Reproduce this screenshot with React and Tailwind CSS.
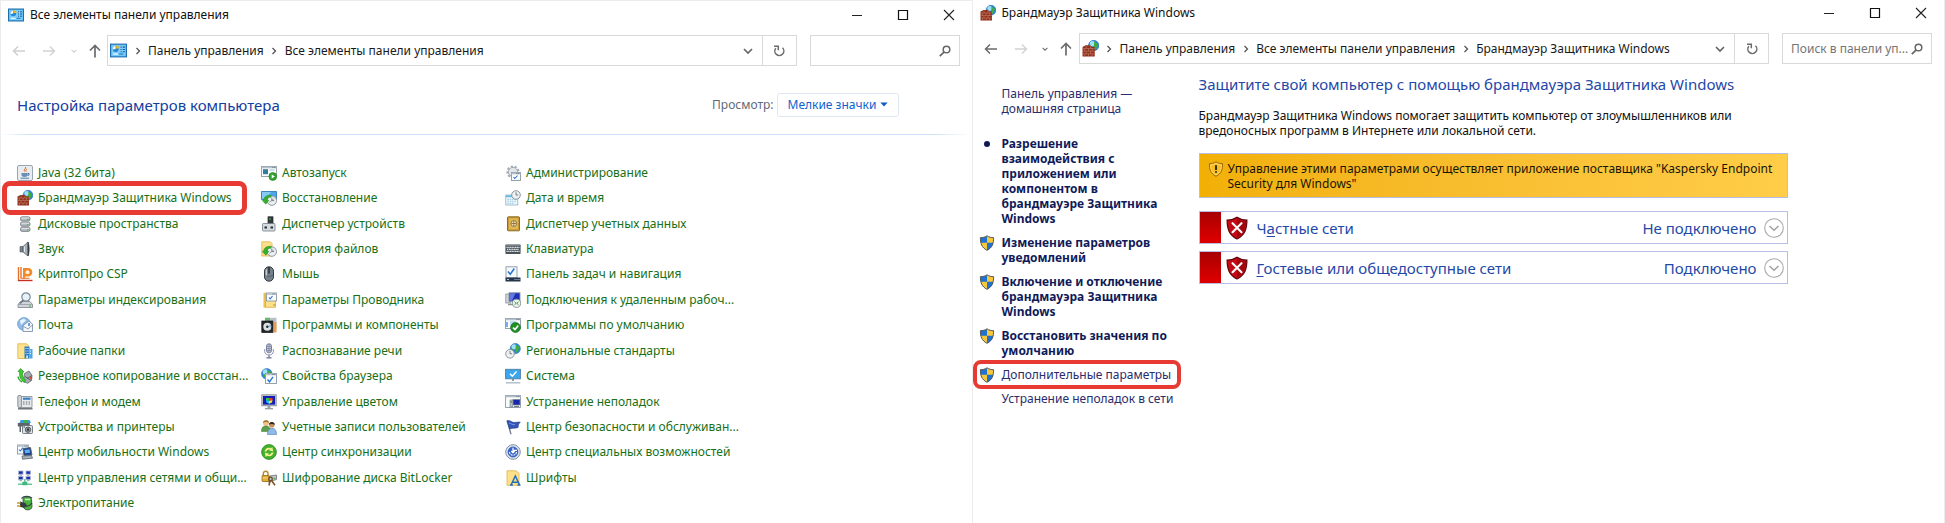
import React from "react";

const Svg = ({ children, className = "h-4 w-4", box = "0 0 16 16" }) => (
  <svg viewBox={box} className={`${className} shrink-0`} fill="none" aria-hidden="true">
    {children}
  </svg>
);

/* ---------- shared drawing pieces ---------- */

const Globe = ({ cx, cy, r }) => (
  <g>
    <circle cx={cx} cy={cy} r={r} fill="#2f86dd" stroke="#1b5fae" strokeWidth=".5" />
    <circle cx={cx - r * 0.25} cy={cy - r * 0.35} r={r * 0.5} fill="#9fe0f5" />
    <path d={`M${cx + r * 0.1} ${cy - r * 0.8}l${r * 0.7} ${r * 0.5}l-${r * 0.3} ${r * 0.9}l-${r * 0.5} ${r * 0.2}z`} fill="#3fae3a" />
    <path d={`M${cx - r * 0.8} ${cy}l${r * 0.6} ${r * 0.2}l-${r * 0.1} ${r * 0.6}z`} fill="#3fae3a" />
  </g>
);

const Clock = ({ cx, cy, r }) => (
  <g>
    <circle cx={cx} cy={cy} r={r} fill="#eef1f3" stroke="#8a949c" strokeWidth="1" />
    <path d={`M${cx} ${cy - r * 0.65}V${cy}H${cx + r * 0.5}`} stroke="#5a646c" strokeWidth=".8" />
  </g>
);

const HistoryClock = () => (
  <g>
    <Clock cx={10.8} cy={10.6} r={4.7} />
    <path d="M8.3 12.3 12.8 9" stroke="#7b858c" strokeWidth=".8" />
    <path d="M2.3 10.5C3 6.5 6.3 4.6 10.3 5.4L9.8 7.4C7.5 7 6 8.3 5.9 10.3H7.9L4.8 14.2 1.2 10.5z" fill="#35b02f" stroke="#1d7f1c" strokeWidth=".4" />
  </g>
);

const WindowFrame = ({ x = 0.5, y = 1.5, w = 15, h = 10 }) => (
  <g>
    <rect x={x} y={y} width={w} height={h} fill="#fbfcfd" stroke="#8b98a5" strokeWidth=".9" />
    <path d={`M${x} ${y + 1}h${w}`} stroke="#b5c0ca" strokeWidth="1.6" />
    <path d={`M${x + w - 4} ${y + 1}h.9m1 0h.9`} stroke="#4d5c69" strokeWidth=".9" />
  </g>
);

/* ---------- application icons ---------- */

const ControlPanelIcon = ({ className }) => (
  <Svg className={className}>
    <rect x=".5" y="2" width="15" height="12" fill="#4fb3ee" stroke="#1f6fae" />
    <rect x="1.5" y="3" width="13" height="10" fill="#7fcdf8" />
    <circle cx="5.3" cy="6.5" r="2.8" fill="#2187d6" />
    <path d="M5.3 6.5V3.7A2.8 2.8 0 0 0 2.6 7z" fill="#fff" />
    <path d="M5.8 6V3.2a2.8 2.8 0 0 1 2.7 2.8z" fill="#f4b41b" />
    <path d="M10 4.8h1m1 0h2M10 7h1m1 0h2M10 9.2h1m1 0h2" stroke="#0c5aa5" />
    <path d="M3 11.3h4.5" stroke="#fff" />
    <path d="M8.5 11.3h4" stroke="#1c74c1" />
  </Svg>
);

const FirewallIcon = ({ className }) => (
  <Svg className={className}>
    <Globe cx={11} cy={5.2} r={4.9} />
    <path d="M.5 6.500l3-1.500h4l2 1.500h2.500V15.500H.5z" fill="#8f3220" />
    <path d="M.5 8h11.500M.5 10.500h11.500M.5 13h11.500M4 5.500V8m4-2.5V8M2.500 8v2.500m3.600-2.500v2.500M9.500 8v2.500M4 10.500V13m4-2.500V13m-5.500 0v2.500m3.600-2.500v2.500m3.400-2.500v2.500" stroke="#cf866b" strokeWidth=".5" />
  </Svg>
);

const ShieldShape = "M8 .8c2 1.400 4.300 1.900 6.600 1.900 0 5.800-1.200 9.900-6.600 12.600C2.600 12.600 1.400 8.500 1.400 2.700 3.700 2.700 6 2.200 8 .8z";

const UacShield = ({ className }) => (
  <Svg className={className}>
    <path d={ShieldShape} fill="#f9c73a" />
    <path d="M8 1.200v6.500H1.700C1.500 6 1.400 4.500 1.400 2.700 3.700 2.700 6 2.300 8 1.200zM8 7.700h6.200c-.7 3.600-2.400 6-6.200 7.500z" fill="#1e73d2" />
    <path d={ShieldShape} stroke="#4c5560" strokeWidth="1" />
  </Svg>
);

const WarnShield = ({ className }) => (
  <Svg className={className}>
    <path d={ShieldShape} fill="#fbbd1d" stroke="#9a6a05" strokeWidth="1" />
    <path d="M8 2.300c1.700 1 3.500 1.500 5.300 1.600 0 4.500-1.100 7.700-5.300 9.900-4.200-2.200-5.300-5.400-5.300-9.900C4.500 3.800 6.300 3.300 8 2.300z" stroke="#ffe08a" strokeWidth=".8" />
    <path d="M8 4.300v4.700M8 10.200v1.600" stroke="#1d1600" strokeWidth="1.700" />
  </Svg>
);

const ErrorShield = ({ className }) => (
  <Svg className={className}>
    <path d={ShieldShape} fill="#c70b14" stroke="#5e0509" strokeWidth=".8" />
    <path d="M8 1.600c1.900 1.200 3.800 1.700 5.900 1.800-.1 5-1.200 8.500-5.900 11z" fill="#a5060d" />
    <path d="m5 4.800 6 6m0-6-6 6" stroke="#fff" strokeWidth="1.400" strokeLinecap="round" />
  </Svg>
);

/* ---------- icons of the control panel items ---------- */

const itemIcons = {
  java: (
    <>
      <rect x=".5" y=".5" width="15" height="15" rx="1.500" fill="#e9edf1" stroke="#9aa6b2" />
      <path d="M8.500 2c1 1.500-2.500 2.600-1 4.500M10 4c-1.500.8-1.500 1.500-.8 2.800" stroke="#e0702a" strokeWidth="1" />
      <path d="M4.500 8h6v1.800c0 1.700-1 2.200-3 2.200s-3-.5-3-2.200z" fill="#6c8fb3" />
      <path d="M10.500 8.500h1.500v1.700h-1.700" stroke="#3f6c99" strokeWidth=".9" />
      <path d="M3.500 13.200h8.500" stroke="#4d7aa6" strokeWidth="1" />
    </>
  ),
  storage: (
    <>
      {[0.8, 6, 11.200].map((y) => (
        <g key={y}>
          <rect x="3.500" y={y} width="9.500" height="4.200" rx="1.600" fill="#b5bbc0" stroke="#6f777e" strokeWidth=".8" />
          <path d={`M4.500 ${y + 1.200}h7.500`} stroke="#e9ecee" strokeWidth=".9" />
          <rect x="10" y={y + 2} width="1.600" height="1.200" fill="#4ec23c" />
        </g>
      ))}
    </>
  ),
  sound: (
    <>
      <path d="M3 5.500h3v5.500H3z" fill="#7c858d" stroke="#4d555c" strokeWidth=".6" />
      <path d="M6 5.500 11 1v14l-5-4z" fill="#a6afb7" stroke="#50595f" strokeWidth=".7" />
      <path d="M11 1c1.600 3 1.600 11 0 14z" fill="#38414a" stroke="#2b3238" strokeWidth=".6" />
      <path d="M7.500 5.500v5.500" stroke="#e3e8ec" />
    </>
  ),
  crypto: (
    <>
      <path d="M1.500 1v14M4 1v11" stroke="#e8722b" strokeWidth="1.400" />
      <path d="M1 14.500h14.500" stroke="#c62f22" strokeWidth="1.400" />
      <path d="M3.500 12.300h9" stroke="#e8722b" />
      <path d="M6 2h5c3 0 4.300 2 4.300 4.200S13.700 10.500 11 10.500H8V13H6z" fill="#f28a2c" />
      <circle cx="10.500" cy="6.300" r="2" fill="#fff3d8" />
    </>
  ),
  indexing: (
    <>
      <path d="M1 12.500 3.500 9.500h9.500l2.500 3v3H1z" fill="#cfd5da" stroke="#7b848c" strokeWidth=".8" />
      <path d="M1 12.500h14.500" stroke="#8d969d" strokeWidth=".7" />
      <path d="M12 14h2" stroke="#3fae3a" />
      <circle cx="9" cy="5" r="4.200" fill="#e6f2fa" stroke="#7d8994" strokeWidth="1.200" />
      <path d="M6.200 8.200 3 11.500" stroke="#6d7882" strokeWidth="1.700" />
    </>
  ),
  mail: (
    <>
      <circle cx="7" cy="7" r="6.400" fill="#8fbbe8" stroke="#5f8fc4" strokeWidth=".7" />
      <path d="M3 3.500 7 1.500l2 2-3 2.500-2 2z" fill="#e9f4fd" />
      <path d="M6 8.500 12 4l3.500 3v7.500H6z" fill="#f4f8fc" stroke="#7288a4" strokeWidth=".8" />
      <path d="m6 9 5 3 4.500-4" stroke="#7288a4" strokeWidth=".8" />
      <path d="M12 6v3" stroke="#3364b4" strokeWidth="1.300" />
    </>
  ),
  workfolders: (
    <>
      <path d="M.8.8h9l1.500 1.700v13H.8z" fill="#ffe28c" stroke="#dcb24a" strokeWidth=".8" />
      <rect x="7.500" y="3.500" width="5" height="12" fill="#2c7fc4" />
      <rect x="12.500" y="6" width="3" height="9.500" fill="#4da5e2" />
      <path d="M8.500 5.500h1m1 0h1m-3 2.500h1m1 0h1m-3 2.500h1m1 0h1m1.500-2.500h1m-1 2.500h1" stroke="#e3f3ff" strokeWidth="1.200" />
      <rect x="9.300" y="12.500" width="1.600" height="3" fill="#e3f3ff" />
    </>
  ),
  backup: (
    <>
      <path d="M7.500 5.500 12 3l3 4.500-.5 5-4 2.800-4-2z" fill="#a5acb2" stroke="#5c646b" strokeWidth=".8" />
      <path d="m8 8.500 6 4m1-5-5 3" stroke="#454d53" strokeWidth=".8" />
      <path d="M1 3.500 3.500.5 7 4H5.500c-.5 3.500.5 6 3 8l-1 2.500C4 12.500 2 9 2.700 3.800z" fill="#3ccf2e" stroke="#1a8216" strokeWidth=".6" />
      <path d="M1 8.500c.5 3 2 4.500 4 5.300" stroke="#27a51f" strokeWidth="1.300" />
      <circle cx="14" cy="10" r="1.200" fill="#e0452f" />
    </>
  ),
  phone: (
    <>
      <path d="M3.500 2.500H15v11H3.500z" fill="#e7eaec" stroke="#7e878e" strokeWidth=".8" />
      <rect x=".8" y="1.500" width="3.600" height="12" rx="1.200" fill="#d2d7db" stroke="#747d84" strokeWidth=".8" />
      <rect x="6" y="3.600" width="7.500" height="2.200" fill="#3a7fc5" />
      <path d="M6 8h1.500m1.300 0h1.500m1.300 0H13M6 10h1.500m1.300 0h1.500m1.300 0H13" stroke="#68727a" strokeWidth="1.100" />
      <path d="M1 14.800h14.500" stroke="#565e65" strokeWidth="1.300" />
    </>
  ),
  printers: (
    <>
      <path d="M3.500 1h9l1.500 3H2.500z" fill="#3a9be4" />
      <path d="M6 1h4v3H6z" fill="#39b54a" />
      <path d="M.8 4h12v3.500H4V13H2.500V7.500H.8z" fill="#5c646c" />
      <rect x="5.500" y="6.500" width="10" height="8" rx="1" fill="#dfe3e6" stroke="#5c656c" strokeWidth=".8" />
      <circle cx="11" cy="10.700" r="2.700" fill="#8e979e" stroke="#40484e" strokeWidth=".8" />
      <circle cx="11" cy="10.700" r="1.100" fill="#23292e" />
      <path d="M6.500 8h1.500" stroke="#30383e" />
    </>
  ),
  mobility: (
    <>
      <WindowFrame x={0.5} y={1} w={11} h={9} />
      <path d="m2 5.500 1.300 1.500L6 3.500" stroke="#2476d2" strokeWidth="1.100" />
      <path d="M6 4.500 13.500 3.500 15 11l-8 .5z" fill="#1b3f8f" stroke="#57626d" strokeWidth=".9" />
      <path d="M7.500 6 12.500 5.200l.6 3.500-4.900.5z" fill="#5fb1ee" />
      <path d="m5 12 9.500-.5 1 2.700-10 1z" fill="#a9b2ba" stroke="#59636c" strokeWidth=".8" />
    </>
  ),
  network: (
    <>
      {[[1.500, 1], [9, 1], [1.500, 6.500], [9, 6.500]].map(([x, y]) => (
        <g key={`${x}-${y}`}>
          <rect x={x} y={y} width="4.500" height="3.200" fill="#1c2fb4" stroke="#a8b5ce" strokeWidth=".8" />
          <path d={`M${x + 1} ${y + 4.200}h2.500`} stroke="#8695a8" strokeWidth=".9" />
        </g>
      ))}
      <path d="M7.800 9v4M1 14.200h14" stroke="#66c79a" strokeWidth="1.600" />
      <rect x="5.300" y="11.800" width="5" height="3.400" rx=".6" fill="#3fb77e" />
    </>
  ),
  power: (
    <>
      <path d="M6 4.500C6 1 14.500 1 14.500 4.500l.5 7c0 4.500-8.500 4.500-8.500 0z" fill="#49b43f" stroke="#2a4a2a" strokeWidth=".8" />
      <path d="M4.500 3.500C7 .8 12 .8 15 3" stroke="#39444d" strokeWidth="1.200" />
      <path d="M8 4.500h5" stroke="#c6f0bb" strokeWidth="1.500" />
      <path d="M3 6.500 8 8c2.500 1 2 4-1 4.700L3 12z" fill="#353c42" />
      <path d="M0 8h3.500M0 11h3.500" stroke="#c9982c" strokeWidth="1.300" />
      <path d="M8.500 11c3 1 4.500-.5 6.500-3" stroke="#2f363b" strokeWidth="1.100" />
    </>
  ),
  autoplay: (
    <>
      <WindowFrame />
      <rect x="2" y="4.200" width="5" height="5" fill="#2f7f9c" />
      <path d="M8.500 5h5" stroke="#9fc4dd" />
      <circle cx="11.800" cy="11.500" r="3.900" fill="#2fa52b" stroke="#1a7a18" strokeWidth=".6" />
      <path d="m10.700 9.500 3.200 2-3.200 2z" fill="#fff" />
    </>
  ),
  recovery: (
    <>
      <path d="M.5 1.500h15v8H.5z" fill="#4aa7e8" stroke="#2471ae" strokeWidth=".8" />
      <path d="M1 2h9L5 9H1z" fill="#85cbf6" />
      <HistoryClock />
    </>
  ),
  devices: (
    <>
      <rect x="7" y=".8" width="5" height="9" fill="#33393e" stroke="#1f2428" strokeWidth=".7" />
      <path d="M8 3h2" stroke="#43c13a" strokeWidth="1.200" />
      <rect x="1.500" y="7.500" width="12.500" height="7.500" rx=".8" fill="#d6dbdf" stroke="#737c83" strokeWidth=".8" />
      <path d="M3.500 11.500h2.500m3.500 0H12" stroke="#272d32" strokeWidth="2.200" />
    </>
  ),
  filehistory: (
    <>
      <path d="M.8.8h8.500L11 2.500V15H.8z" fill="#ffe08a" stroke="#ddb54e" strokeWidth=".8" />
      <HistoryClock />
    </>
  ),
  mouse: (
    <>
      <rect x="3.500" y=".8" width="9" height="14.400" rx="4.300" fill="#77818b" stroke="#333b43" strokeWidth="1" />
      <path d="M5.300 3.500v7" stroke="#c4ccd3" strokeWidth="1.400" />
      <path d="M8 1v6.500" stroke="#252c33" strokeWidth="1.500" />
      <path d="M4 9.500c2.500 1.200 5.500 1.200 8 0" stroke="#4b555f" strokeWidth=".7" />
    </>
  ),
  explorer: (
    <>
      <path d="M2.500.8h3v14.700H2.500z" fill="#edbf4c" />
      <path d="M4.500 1.800h10v13.500h-10z" fill="#ffe08a" stroke="#d9ae42" strokeWidth=".8" />
      <WindowFrame x={5.500} y={1} w={10} h={8} />
      <path d="m8 5.500 1.200 1.300L11.500 4" stroke="#2476d2" strokeWidth="1.100" />
      <path d="M12 13h2.500" stroke="#b8882a" />
    </>
  ),
  programs: (
    <>
      <path d="M4 .8h11.500v12H11z" fill="#bac1c6" />
      <path d="M12 5h3.500v10.500H12z" fill="#e7a05a" />
      <path d="M4 .8h5v3H4z" fill="#6eb573" />
      <rect x=".8" y="4" width="11" height="11.500" fill="#23282d" stroke="#0f1316" strokeWidth=".7" />
      <circle cx="6.300" cy="9.700" r="4" fill="#dde1e4" />
      <path d="M6.300 9.700 9.500 7.500a4 4 0 0 1 .5 3z" fill="#8fb8d8" />
      <circle cx="6.300" cy="9.700" r="1.200" fill="#23282d" />
    </>
  ),
  speech: (
    <>
      <rect x="5.500" y=".8" width="5" height="9" rx="2.400" fill="#c3c8da" stroke="#6c7390" strokeWidth=".9" />
      <path d="M5.500 3.500h5M5.500 5.500h5M5.500 7.500h5M8 1v8" stroke="#7b829d" strokeWidth=".7" />
      <path d="M3.700 6v2.500c0 4.600 8.600 4.600 8.600 0V6" stroke="#8d94ac" strokeWidth="1" />
      <path d="M8 12v2M5.500 14.800h5" stroke="#7b829d" strokeWidth="1.400" />
    </>
  ),
  internet: (
    <>
      <Globe cx={5.800} cy={5.800} r={5.300} />
      <WindowFrame x={4.500} y={5.500} w={11} h={10} />
      <path d="m6.500 11.500 2 2.300L12 8.800" stroke="#2476d2" strokeWidth="1.400" />
    </>
  ),
  color: (
    <>
      <rect x=".8" y=".8" width="14.400" height="11" fill="#c3c9ce" stroke="#7d868d" strokeWidth=".8" />
      <rect x="2" y="2" width="12" height="8.600" fill="#131fb4" />
      <path d="M5 4h3v3l-3-1z" fill="#2fc93a" />
      <path d="M8 4h3.500v2L8 7z" fill="#ef3a2b" />
      <path d="m5 6 3 1v2.800L5.500 8.500z" fill="#29c4ee" />
      <path d="m8 7 3.500-1-.5 2.500L8 9.800z" fill="#f7e239" />
      <path d="M6.500 12h3v2h-3z" fill="#9aa3aa" />
      <path d="M4 14.700h8" stroke="#8b949b" strokeWidth="1.200" />
    </>
  ),
  users: (
    <>
      <circle cx="5" cy="4" r="3" fill="#f0c48c" />
      <path d="M2 4C2 .5 8 0 8 4 6.500 3.200 4 2.500 2 4z" fill="#a5752f" />
      <path d="M.5 12.500C.5 8 2.500 7 5 7s4.500 1.500 4.500 5.500z" fill="#5f9e4c" stroke="#3f7431" strokeWidth=".5" />
      <circle cx="10.800" cy="5.800" r="2.800" fill="#c98e5d" />
      <path d="M8 5.500c0-3.500 5.800-3.500 5.800.3C12 4.800 10 4.500 8 5.500z" fill="#2e2a29" />
      <path d="M6.500 15.500c0-4.500 2-6.200 4.500-6.200s4.500 1.700 4.500 6.200z" fill="#8ebbe6" stroke="#4d7fb5" strokeWidth=".6" />
    </>
  ),
  sync: (
    <>
      <circle cx="8" cy="8" r="7.400" fill="#43b02f" stroke="#278a1d" strokeWidth=".8" />
      <path d="M3.500 7.500C4 4.500 7 3 10 4.300L11.300 3l.9 4.200-4.200-.6 1.200-1C7.500 5 5.700 6 5.500 7.500z" fill="#f5f08e" />
      <path d="M12.500 8.500c-.5 3-3.500 4.500-6.500 3.200L4.700 13l-.9-4.200 4.200.6-1.200 1c1.700.6 3.500-.4 3.700-1.900z" fill="#f5f08e" />
    </>
  ),
  bitlocker: (
    <>
      <path d="M5 6.500 15.500 5v4.500L7 12z" fill="#bfc5ca" stroke="#6b747b" strokeWidth=".8" />
      <path d="M12.500 8.500h2" stroke="#3db733" strokeWidth="1.200" />
      <path d="M2.300 6V3.500c0-3 4.700-3 4.700 0V6" stroke="#b58a2d" strokeWidth="1.400" />
      <rect x="1" y="5.500" width="7" height="6" rx=".7" fill="#e3ad35" stroke="#94691a" strokeWidth=".8" />
      <path d="M1.500 8h6" stroke="#f8dd8e" strokeWidth=".9" />
      <circle cx="9.500" cy="9" r="1.800" stroke="#6b4a20" strokeWidth="1.300" />
      <path d="m10.500 10.500 3.500 4.700M9 11l-1 4.500" stroke="#7a5626" strokeWidth="1.600" />
    </>
  ),
  admin: (
    <>
      <circle cx="8" cy="7" r="5.600" stroke="#a3acb4" strokeWidth="2" strokeDasharray="2.200 1.700" />
      <circle cx="8" cy="7" r="4.600" fill="#e3e7ea" stroke="#929ba3" strokeWidth=".8" />
      <WindowFrame x={6.500} y={7.500} w={9} h={8} />
      <path d="m8.500 12 1.300 1.500L12.500 10.500" stroke="#2476d2" strokeWidth="1.100" />
    </>
  ),
  datetime: (
    <>
      <rect x=".8" y="5" width="12" height="10" fill="#eaf6fc" stroke="#8fb3c6" strokeWidth=".8" />
      <path d="M.8 6.300h12" stroke="#67b7df" strokeWidth="1.800" />
      <path d="M2.500 9.300h8.500M2.500 11.300h8.500M2.500 13.300h6" stroke="#9fc9de" strokeWidth="1" strokeDasharray="1.500 .8" />
      <Clock cx={11} cy={5} r={4.300} />
    </>
  ),
  credentials: (
    <>
      <rect x="2.500" y=".8" width="12" height="14" rx=".8" fill="#c79a35" stroke="#80601c" strokeWidth=".9" />
      <rect x="4" y="2.300" width="9" height="11" fill="#deb654" />
      <circle cx="8.800" cy="7.500" r="2.900" fill="#f3e6bf" stroke="#7d6126" strokeWidth=".8" />
      <path d="M8.800 5v5M6.300 7.500h5" stroke="#7d6126" strokeWidth=".8" />
    </>
  ),
  keyboard: (
    <>
      <rect x=".4" y="3.500" width="15.200" height="9.500" rx=".7" fill="#4b535b" />
      <path d="M1 4.300h14" stroke="#8a949d" strokeWidth=".9" />
      <path d="M1.500 6.300h13M2 8.300h12M1.500 10.300h13" stroke="#dbe0e4" strokeWidth="1.200" strokeDasharray="1.300 .4" />
    </>
  ),
  taskbar: (
    <>
      <rect x="1" y=".8" width="11" height="11" fill="#f5f9fc" stroke="#8a98a5" strokeWidth=".9" />
      <path d="m3 5.500 2.300 2.800L9.300 2.500" stroke="#2476d2" strokeWidth="1.500" />
      <path d="M.5 11.500h15v4H.5z" fill="#26354a" />
      <path d="M2 13.500h2m5.500 0h1m1 0h1m1 0h1" stroke="#b8c7d8" strokeWidth="1.200" />
    </>
  ),
  remote: (
    <>
      <rect x=".8" y="2" width="5" height="9" fill="#cdd3d8" stroke="#7d878f" strokeWidth=".7" />
      <rect x="4" y=".8" width="11" height="8.500" fill="#1a2fb5" stroke="#8d98a3" strokeWidth=".9" />
      <path d="M4.500 1.300h6L7 8.800H4.500z" fill="#6379de" />
      <path d="M3 12.500h6" stroke="#8b959d" strokeWidth="1.500" />
      <circle cx="11.500" cy="11.300" r="4.100" fill="#eef2f0" stroke="#858f96" strokeWidth=".9" />
      <path d="m9.500 9.800 1.700 1.500-1.700 1.500m4-3-1.700 1.500 1.700 1.500" stroke="#2fa52b" strokeWidth="1" />
    </>
  ),
  defaults: (
    <>
      <WindowFrame />
      <path d="M2 5v5" stroke="#2f86dd" strokeWidth="1.300" />
      <rect x="5" y="4" width="6" height="4" fill="#b9dcf5" />
      <circle cx="10.500" cy="10.500" r="4.900" fill="#218f25" stroke="#13661a" strokeWidth=".7" />
      <path d="m8 10.600 2 2 3.300-4" stroke="#fff" strokeWidth="1.500" />
    </>
  ),
  region: (
    <>
      <Globe cx={10.300} cy={5.600} r={5.100} />
      <Clock cx={5} cy={10.800} r={4.300} />
    </>
  ),
  system: (
    <>
      <rect x=".6" y="1.300" width="14.800" height="9.500" fill="#3ba6ee" stroke="#4f7da0" strokeWidth=".9" />
      <path d="m5 5.800 2.300 2.400L11.500 3.500" stroke="#fff" strokeWidth="1.500" />
      <path d="M8 11v2" stroke="#8b959d" strokeWidth="2" />
      <path d="M.8 14.800h14.500" stroke="#a9b5c0" strokeWidth="1.300" />
    </>
  ),
  troubleshoot: (
    <>
      <WindowFrame x={0.600} y={1.500} w={14.800} h={12} />
      <rect x="8" y="5.500" width="7" height="5.500" fill="#1a25ad" stroke="#7e8993" strokeWidth=".7" />
      <rect x="5" y="6" width="2.800" height="7" fill="#b9c1c7" stroke="#6e7880" strokeWidth=".6" />
      <path d="M5.500 8h1.500" stroke="#35a52c" strokeWidth="1.300" />
      <path d="M9 12.500h5" stroke="#737d85" strokeWidth="1.300" />
    </>
  ),
  flag: (
    <>
      <path d="M2 1.500 6 15.200" stroke="#6f7a94" strokeWidth="1.300" />
      <path d="M2.200 1.800C5 .8 6.500 3.500 9 3.500c2 0 4-.7 6.300-.2-2 1.200-2 3.200-2.200 5.200-2.500 1-5 .2-8.500 1.500z" fill="#3355b8" stroke="#1e3a8d" strokeWidth=".6" />
      <path d="M4 4c2 .5 3 1.800 6 1.800" stroke="#7c97e4" strokeWidth="1" />
    </>
  ),
  ease: (
    <>
      <circle cx="8" cy="8" r="7.300" fill="#dfe4ec" stroke="#8791a3" strokeWidth="1" />
      <circle cx="8" cy="8" r="5.400" fill="#3b64c8" />
      <path d="M8 3.800v4.700M6.300 7l1.700 1.800L9.700 7M8.500 6.300H12" stroke="#fff" strokeWidth="1.200" />
      <path d="M4.500 8c.3 4.300 6.700 4.300 7 0" stroke="#fff" strokeWidth="1.100" strokeDasharray="2 .8" />
    </>
  ),
  fonts: (
    <>
      <path d="M2 .8h9l3 2.500v12H2z" fill="#ffe08a" stroke="#dcb24a" strokeWidth=".8" />
      <path d="m6 15 4.300-9 4.300 9M7.500 12.300h5.500M5 15h2.800M12.500 15h3" stroke="#1d6fc0" strokeWidth="1.500" />
    </>
  ),
};

const columns = [
  [
    ["java", "Java (32 бита)"],
    ["firewall", "Брандмауэр Защитника Windows"],
    ["storage", "Дисковые пространства"],
    ["sound", "Звук"],
    ["crypto", "КриптоПро CSP"],
    ["indexing", "Параметры индексирования"],
    ["mail", "Почта"],
    ["workfolders", "Рабочие папки"],
    ["backup", "Резервное копирование и восстан..."],
    ["phone", "Телефон и модем"],
    ["printers", "Устройства и принтеры"],
    ["mobility", "Центр мобильности Windows"],
    ["network", "Центр управления сетями и общи..."],
    ["power", "Электропитание"],
  ],
  [
    ["autoplay", "Автозапуск"],
    ["recovery", "Восстановление"],
    ["devices", "Диспетчер устройств"],
    ["filehistory", "История файлов"],
    ["mouse", "Мышь"],
    ["explorer", "Параметры Проводника"],
    ["programs", "Программы и компоненты"],
    ["speech", "Распознавание речи"],
    ["internet", "Свойства браузера"],
    ["color", "Управление цветом"],
    ["users", "Учетные записи пользователей"],
    ["sync", "Центр синхронизации"],
    ["bitlocker", "Шифрование диска BitLocker"],
  ],
  [
    ["admin", "Администрирование"],
    ["datetime", "Дата и время"],
    ["credentials", "Диспетчер учетных данных"],
    ["keyboard", "Клавиатура"],
    ["taskbar", "Панель задач и навигация"],
    ["remote", "Подключения к удаленным рабоч..."],
    ["defaults", "Программы по умолчанию"],
    ["region", "Региональные стандарты"],
    ["system", "Система"],
    ["troubleshoot", "Устранение неполадок"],
    ["flag", "Центр безопасности и обслуживан..."],
    ["ease", "Центр специальных возможностей"],
    ["fonts", "Шрифты"],
  ],
];

/* ---------- window chrome ---------- */

const Chevron = ({ className }) => (
  <Svg className={className} box="0 0 10 10">
    <path d="m3.500 2 3 3-3 3" stroke="currentColor" strokeWidth="1.300" />
  </Svg>
);

const ChevronDown = ({ className }) => (
  <Svg className={className} box="0 0 10 10">
    <path d="m1 3 4 4 4-4" stroke="currentColor" strokeWidth="1.700" />
  </Svg>
);

function TitleBar({ icon, title }) {
  return (
    <header className="flex h-[26px] items-center pl-[7px]">
      {icon}
      <h1 className="ml-1.5 flex-1">{title}</h1>
      <button aria-label="Свернуть" className="flex w-[46px] justify-center">
        <Svg className="h-3 w-3" box="0 0 12 12"><path d="M1 6.500h10" stroke="#222" /></Svg>
      </button>
      <button aria-label="Развернуть" className="flex w-[46px] justify-center">
        <Svg className="h-3 w-3" box="0 0 12 12"><path d="M1.500 1.500h9v9h-9z" stroke="#111" strokeWidth="1.200" /></Svg>
      </button>
      <button aria-label="Закрыть" className="flex w-[46px] justify-center">
        <Svg className="h-3 w-3" box="0 0 12 12"><path d="m1 1 10 10M11 1 1 11" stroke="#222" strokeWidth="1.100" /></Svg>
      </button>
    </header>
  );
}

function NavBar({ icon, crumbs, canGoBack, placeholder }) {
  const active = canGoBack ? "text-[#6b6b6b]" : "text-[#cfcfcf]";
  return (
    <div className="mt-[7px] flex h-[31px] items-stretch pr-3 pl-1">
      <button aria-label="Назад" className={`flex w-7 items-center justify-center ${active}`}>
        <Svg className="h-3.5 w-3.5" box="0 0 14 14"><path d="M13 7H1.500M6 2.500 1.500 7 6 11.500" stroke="currentColor" strokeWidth="1.500" /></Svg>
      </button>
      <button aria-label="Вперед" className="flex w-8 items-center justify-center text-[#d2d2d2]">
        <Svg className="h-3.5 w-3.5" box="0 0 14 14"><path d="M1 7h11.500M8 2.500 12.500 7 8 11.500" stroke="currentColor" strokeWidth="1.400" /></Svg>
      </button>
      <button aria-label="Последние расположения" className={`flex w-[17px] items-center justify-center ${active}`}>
        <ChevronDown className="h-1.5 w-1.5" />
      </button>
      <button aria-label="Вверх" className="flex w-[25px] items-center justify-center text-[#6b6b6b]">
        <Svg className="h-3.5 w-3.5" box="0 0 14 14"><path d="M7 13.500V1.500M2 6.500l5-5 5 5" stroke="currentColor" strokeWidth="1.700" /></Svg>
      </button>
      <div className="flex min-w-0 flex-1 border border-[#d9d9d9]">
        <nav className="flex min-w-0 flex-1 items-center overflow-hidden pl-0.5 whitespace-nowrap">
          {icon}
          {crumbs.map((crumb, i) => (
            <React.Fragment key={crumb}>
              <span className="flex w-[21px] shrink-0 justify-center text-[#555]">
                <Chevron className="h-2.5 w-2.5" />
              </span>
              <a href="#" className="text-[#1a1a1a]">{crumb}</a>
            </React.Fragment>
          ))}
        </nav>
        <button aria-label="Предыдущие расположения" className="flex w-7 items-center justify-center text-[#666]">
          <ChevronDown className="h-2.5 w-2.5" />
        </button>
        <button aria-label="Обновить" className="flex w-[34px] items-center justify-center border-l border-[#d9d9d9] text-[#6b6b6b]">
          <Svg className="h-3 w-3" box="0 0 12 12">
            <path d="M9.500 2.800A4.500 4.500 0 1 1 2.800 3.200" stroke="currentColor" strokeWidth="1.500" />
            <path d="M1 1.200h4.300v4" stroke="currentColor" strokeWidth="1.500" />
          </Svg>
        </button>
      </div>
      <div className="ml-[13px] flex w-[150px] items-center border border-[#d9d9d9] pr-2 pl-2">
        <input
          type="text"
          aria-label="Поиск"
          placeholder={placeholder}
          className="w-0 min-w-0 flex-1 bg-transparent outline-none placeholder:text-[#757575]"
        />
        <Svg className="h-3 w-3" box="0 0 12 12">
          <circle cx="7.500" cy="4.500" r="3.300" stroke="#666" strokeWidth="1.500" />
          <path d="M5.200 6.800.8 11.200" stroke="#666" strokeWidth="1.700" />
        </Svg>
      </div>
    </div>
  );
}

/* ---------- left window ---------- */

function ControlPanelWindow() {
  return (
    <section className="min-w-0 border border-b-0 border-[#ececec] pt-px">
      <TitleBar icon={<ControlPanelIcon className="h-4 w-4" />} title="Все элементы панели управления" />
      <NavBar
        icon={<ControlPanelIcon className="h-[17px] w-[17px]" />}
        crumbs={["Панель управления", "Все элементы панели управления"]}
      />
      <div className="mt-[27px] flex h-6 items-center pr-[73px] pl-4">
        <h2 className="flex-1 text-[15px] text-[#12409f]">Настройка параметров компьютера</h2>
        <label htmlFor="view-mode" className="mr-[3px] text-[#5f6a77]">Просмотр:</label>
        <div className="relative h-6 w-[122px]">
          <select
            id="view-mode"
            className="h-full w-full appearance-none rounded-[3px] border border-[#e1e7f2] bg-white pl-[10px] text-[#0f62cf] outline-none"
          >
            <option>Мелкие значки</option>
          </select>
          <Svg className="pointer-events-none absolute top-2 right-[11px] h-2 w-2" box="0 0 8 8">
            <path d="M.3 1.500h7.400L4 5.500z" fill="#0f5bc9" />
          </Svg>
        </div>
      </div>
      <div className="mt-[17px] h-px bg-[linear-gradient(to_right,transparent,#cde2f6_3%,#cde2f6_96%,transparent)]" />
      <div className="mt-[25px] flex pl-4">
        {columns.map((items) => (
          <ul key={items[0][0]} className="grid h-[356px] w-[244px] grid-rows-[repeat(14,1fr)]">
            {items.map(([name, label]) => (
              <li key={name} className="relative flex items-center">
                <a href="#" className="flex items-center gap-[5px] whitespace-nowrap text-[#187018]">
                  {name === "firewall" ? <FirewallIcon className="h-4 w-4" /> : <Svg>{itemIcons[name]}</Svg>}
                  {label}
                </a>
                {name === "firewall" && (
                  <span className="pointer-events-none absolute -inset-y-1 right-[14px] -left-[15px] rounded-lg border-5 border-[#e63a32]" />
                )}
              </li>
            ))}
          </ul>
        ))}
      </div>
    </section>
  );
}

/* ---------- right window ---------- */

const tasks = [
  { text: "Разрешение\nвзаимодействия с\nприложением или\nкомпонентом в\nбрандмауэре Защитника\nWindows", mark: "dot", bold: true },
  { text: "Изменение параметров\nуведомлений", mark: "shield", bold: true },
  { text: "Включение и отключение\nбрандмауэра Защитника\nWindows", mark: "shield", bold: true },
  { text: "Восстановить значения по\nумолчанию", mark: "shield", bold: true },
  { text: "Дополнительные параметры", mark: "shield", boxed: true },
  { text: "Устранение неполадок в сети" },
];

const networks = [
  { key: "private", before: "Ч", letter: "а", after: "стные сети", state: "Не подключено" },
  { key: "guest", before: "", letter: "Г", after: "остевые или общедоступные сети", state: "Подключено" },
];

function FirewallWindow() {
  return (
    <section className="min-w-0 border-r border-[#ececec]">
      <TitleBar icon={<FirewallIcon className="h-4 w-4" />} title="Брандмауэр Защитника Windows" />
      <NavBar
        icon={<FirewallIcon className="h-[17px] w-[17px]" />}
        crumbs={["Панель управления", "Все элементы панели управления", "Брандмауэр Защитника Windows"]}
        canGoBack
        placeholder="Поиск в панели уп..."
      />
      <div className="flex">
        <aside className="w-[226px] shrink-0 pt-[22px] pl-[7px] leading-[15px] whitespace-pre-line">
          <a href="#" className="ml-[22px] block text-[#2a2c6c]">{"Панель управления —\nдомашняя страница"}</a>
          <ul className="mt-5 space-y-[9px]">
            {tasks.map(({ text, mark, bold, boxed }) => (
              <li key={text} className="relative flex gap-2">
                <span className="flex h-[15px] w-3.5 shrink-0 items-center justify-center">
                  {mark === "dot" && <span className="h-1.5 w-1.5 rounded-full bg-[#101a58]" />}
                  {mark === "shield" && <UacShield className="h-4 w-4" />}
                </span>
                <a href="#" className={bold ? "font-bold text-[#101a58]" : "whitespace-nowrap text-[#2a2c6c]"}>{text}</a>
                {boxed && (
                  <span className="pointer-events-none absolute -inset-y-[7px] right-[18px] -left-[7px] rounded-lg border-4 border-[#e63a32]" />
                )}
              </li>
            ))}
          </ul>
        </aside>
        <main className="max-w-[589px] flex-1 pt-2">
          <h2 className="text-[15px] leading-6 text-[#1f48a8]">
            Защитите свой компьютер с помощью брандмауэра Защитника Windows
          </h2>
          <p className="mt-3 max-w-[560px] leading-[15px] text-[#111]">
            Брандмауэр Защитника Windows помогает защитить компьютер от злоумышленников или
            вредоносных программ в Интернете или локальной сети.
          </p>
          <div className="mt-[15px] flex gap-1 border border-[#b9bde6] bg-linear-to-r from-[#f2b005] to-[#ffcd48] px-2 pt-[7px] pb-[6px] leading-[15px] text-[#1a1403]">
            <WarnShield className="h-4 w-4" />
            <p>
              Управление этими параметрами осуществляет приложение поставщика "Kaspersky Endpoint Security для Windows"
            </p>
          </div>
          <div className="mt-[13px] space-y-[7px]">
            {networks.map(({ key, before, letter, after, state }) => (
              <div key={key} className="flex h-[33px] items-center border border-[#b9bde3] pr-[3px] text-[15px] text-[#1f48a8]">
                <span className="w-[21px] self-stretch bg-linear-to-b from-[#a80000] to-[#e00000]" />
                <ErrorShield className="ml-1 h-6 w-6" />
                <a href="#" className="ml-2 flex-1">
                  {before}
                  <span className="underline underline-offset-2">{letter}</span>
                  {after}
                </a>
                <span>{state}</span>
                <button aria-label="Развернуть" className="ml-[7px]">
                  <Svg className="block h-5 w-5" box="0 0 20 20">
                    <circle cx="10" cy="10" r="9.300" stroke="#a9a9a9" strokeWidth="1.100" />
                    <path d="m5.500 8 4.500 4.300L14.500 8" stroke="#a0a0a0" strokeWidth="1.400" />
                  </Svg>
                </button>
              </div>
            ))}
          </div>
        </main>
      </div>
    </section>
  );
}

export default function App() {
  return (
    <div className="grid min-h-screen grid-cols-2 bg-white font-['Noto_Sans','Open_Sans',sans-serif] text-xs text-[#111]">
      <ControlPanelWindow />
      <FirewallWindow />
    </div>
  );
}
